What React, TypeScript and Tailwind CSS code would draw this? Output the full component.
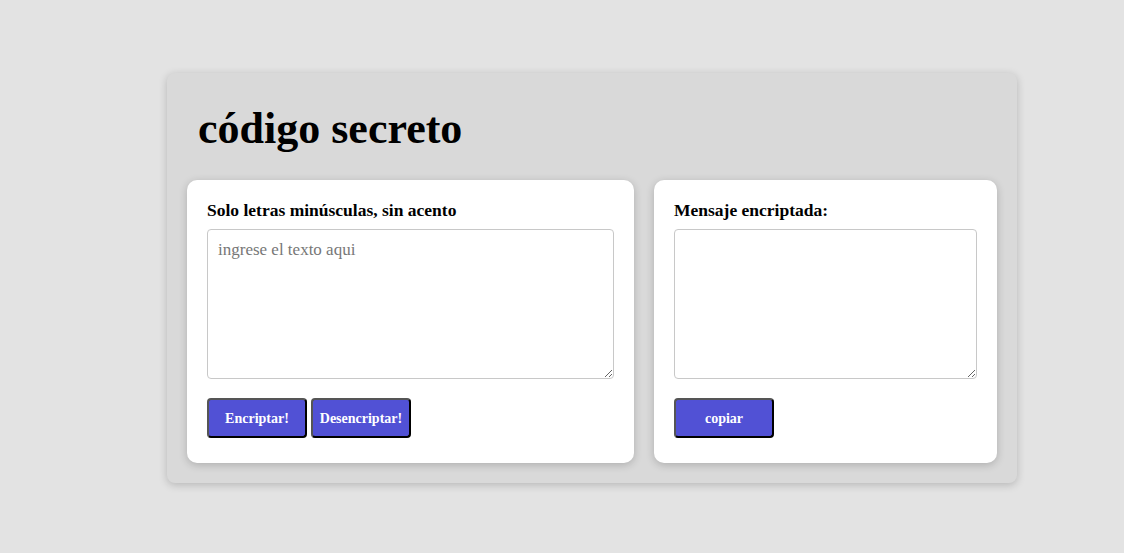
import React, { useState } from "react";

const serif = "font-['Liberation_Serif',serif]";

export default function App() {
  const [texto, setTexto] = useState("");
  const [resultado, setResultado] = useState("");

  const btnClass =
    "w-[100px] h-[40px] rounded-[4px] bg-[#5151d5] text-white text-[14px] font-bold border-2 border-t-[#555] border-l-[#555] border-b-black border-r-black";

  return (
    <div className={`min-h-[553px] w-full bg-[#e3e3e3] pt-[73px] ${serif}`}>
      <div className="ml-[167px] w-[850px] h-[410px] rounded-lg bg-[#d9d9d9] shadow-[0_2px_8px_rgba(0,0,0,0.2)] px-5 pt-[28px]">
        {/* Titulo */}
        <h1 className="pl-[11px] text-[44px] leading-[56px] font-bold text-black">
          código secreto
        </h1>

        <div className="mt-[23px] flex gap-5">
          {/* Entrada */}
          <div className="w-[447px] h-[283px] rounded-[10px] bg-white shadow-[0_2px_8px_rgba(0,0,0,0.2)] px-5 pt-[20px]">
            <p className="text-[17.5px] leading-[20px] font-bold text-black">
              Solo letras minúsculas, sin acento
            </p>
            <textarea
              value={texto}
              onChange={(e) => setTexto(e.target.value)}
              placeholder="ingrese el texto aqui"
              className="mt-[9px] block w-full h-[150px] rounded-[4px] border border-[#c8c8c8] px-[10px] py-[10px] text-[17px] leading-[20px] placeholder:text-[#777]"
            />
            <div className="mt-[19px] flex gap-1">
              <button className={btnClass} onClick={() => setResultado(texto)}>
                Encriptar!
              </button>
              <button className={btnClass} onClick={() => setResultado(texto)}>
                Desencriptar!
              </button>
            </div>
          </div>

          {/* Salida */}
          <div className="w-[343px] h-[283px] rounded-[10px] bg-white shadow-[0_2px_8px_rgba(0,0,0,0.2)] px-5 pt-[20px]">
            <p className="text-[17.5px] leading-[20px] font-bold text-black">
              Mensaje encriptada:
            </p>
            <textarea
              value={resultado}
              readOnly
              className="mt-[9px] block w-full h-[150px] rounded-[4px] border border-[#c8c8c8] px-[10px] py-[10px] text-[17px]"
            />
            <div className="mt-[19px] flex">
              <button className={btnClass}>copiar</button>
            </div>
          </div>
        </div>
      </div>
    </div>
  );
}
